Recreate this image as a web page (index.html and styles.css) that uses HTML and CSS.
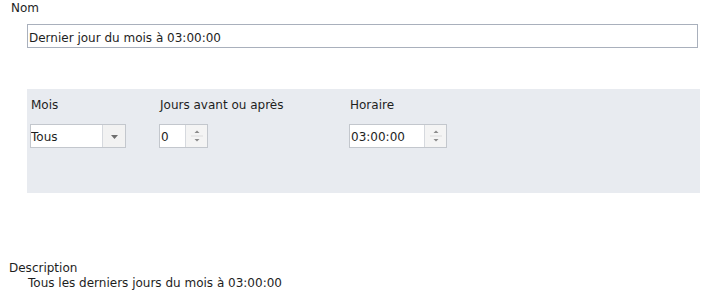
FILE: index.html
```html
<!DOCTYPE html>
<html lang="fr">
<head>
<meta charset="utf-8">
<title>Planification</title>
<link rel="stylesheet" href="styles.css">
</head>
<body>
<div class="form">
  <div class="field-label nom">Nom</div>
  <div class="textbox name-input">Dernier jour du mois à 03:00:00</div>

  <div class="panel">
    <div class="col">
      <div class="plabel">Mois</div>
      <div class="combo">
        <span class="box-text">Tous</span>
        <span class="combo-btn">
          <svg width="7" height="4" viewBox="0 0 7 4"><polygon points="0,0 7,0 3.5,4" fill="#6e6e6e"/></svg>
        </span>
      </div>
    </div>
    <div class="col">
      <div class="plabel">Jours avant ou après</div>
      <div class="spin spin-days">
        <span class="box-text">0</span>
        <span class="spin-btn">
          <svg width="20" height="22" viewBox="0 0 20 22">
            <polygon points="7.5,8 12.5,8 10,5.5" fill="#8a8a8a"/>
            <line x1="4" y1="11" x2="16" y2="11" stroke="#dcdcdc" stroke-width="1"/>
            <polygon points="7.5,14 12.5,14 10,16.5" fill="#8a8a8a"/>
          </svg>
        </span>
      </div>
    </div>
    <div class="col">
      <div class="plabel">Horaire</div>
      <div class="spin spin-time">
        <span class="box-text">03:00:00</span>
        <span class="spin-btn">
          <svg width="20" height="22" viewBox="0 0 20 22">
            <polygon points="7.5,8 12.5,8 10,5.5" fill="#8a8a8a"/>
            <line x1="4" y1="11" x2="16" y2="11" stroke="#dcdcdc" stroke-width="1"/>
            <polygon points="7.5,14 12.5,14 10,16.5" fill="#8a8a8a"/>
          </svg>
        </span>
      </div>
    </div>
  </div>

  <div class="field-label desc-label">Description</div>
  <div class="desc-text">Tous les derniers jours du mois à 03:00:00</div>
</div>
</body>
</html>
```

FILE: styles.css
```css
html, body {
  margin: 0;
  padding: 0;
  background: #ffffff;
}

body {
  font-family: "DejaVu Sans", Verdana, sans-serif;
  font-size: 12px;
  line-height: 14px;
  color: #1e1e1e;
}

.form {
  padding-top: 1px;
}

.field-label {
  line-height: 14px;
}

.nom {
  padding-left: 11px;
}

.textbox {
  box-sizing: border-box;
  border: 1px solid #a9b0bc;
  background: #ffffff;
  line-height: 14px;
}

.name-input {
  margin-top: 9px;
  margin-left: 27px;
  width: 671px;
  height: 24px;
  padding: 6px 0 2px 1px;
  white-space: nowrap;
}

.panel {
  box-sizing: border-box;
  margin-top: 41px;
  margin-left: 27px;
  width: 673px;
  height: 104px;
  padding: 9px 0 0 3px;
  background: #e8ebf0;
  display: grid;
  grid-template-columns: 129px 190px 1fr;
  align-items: start;
}

.col {
  display: flex;
  flex-direction: column;
  align-items: flex-start;
}

.plabel {
  padding-left: 1px;
  line-height: 14px;
  white-space: nowrap;
}

.combo,
.spin {
  box-sizing: border-box;
  margin-top: 12px;
  height: 24px;
  border: 1px solid #c3c7cd;
  background: #ffffff;
  display: flex;
}

.combo {
  width: 96px;
}

.spin-days {
  width: 49px;
}

.spin-time {
  width: 98px;
}

.box-text {
  flex: 1;
  padding: 5px 0 3px 0;
  line-height: 14px;
  white-space: nowrap;
  overflow: hidden;
}

.spin .box-text {
  padding-left: 1px;
}

.combo-btn {
  box-sizing: border-box;
  width: 23px;
  border-left: 1px solid #d6d9de;
  background: #f2f2f2;
  display: flex;
  align-items: center;
  justify-content: center;
}

.combo-btn svg {
  margin-top: 1px;
}

.spin-btn {
  box-sizing: border-box;
  width: 22px;
  border-left: 1px solid #d6d9de;
  background: #f4f4f4;
  display: flex;
  align-items: center;
  justify-content: center;
}

.spin-btn svg {
  display: block;
}

.desc-label {
  margin-top: 68px;
  padding-left: 9px;
}

.desc-text {
  margin-top: 1px;
  padding-left: 28px;
  line-height: 14px;
}
```
